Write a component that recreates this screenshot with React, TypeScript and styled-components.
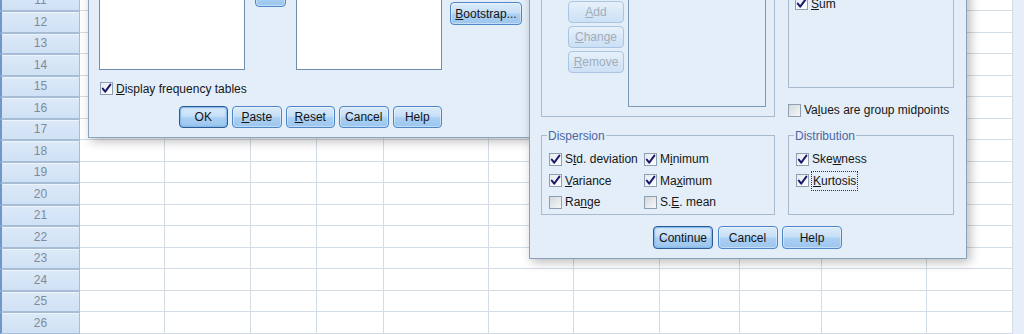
import React from "react";
import styled, { createGlobalStyle, css } from "styled-components";

const Global = createGlobalStyle`
  html, body { margin: 0; padding: 0; background: #fff; }
  body { font-family: "Liberation Sans", Arial, sans-serif; font-size: 12px; color: #111; }
  * { box-sizing: border-box; }
`;

const Screen = styled.div`
  position: relative;
  width: 1024px;
  height: 334px;
  overflow: hidden;
  background: #fff;
`;

/* ---------- spreadsheet ---------- */
const Sheet = styled.div`
  display: flex;
  flex-direction: column;
  margin-top: -10.5px;
`;

const Row = styled.div`
  display: flex;
  height: 21.5px;
  flex: none;
`;

const RowHeader = styled.div`
  width: 80px;
  flex: none;
  display: flex;
  align-items: center;
  justify-content: center;
  color: #7d8b9b;
  font-size: 12px;
  background: linear-gradient(#dce9f8, #d0e1f5);
  border: 1px solid #a7bdd6;
  border-left: 2px solid #6f97c8;
  box-shadow: inset 0 1px 0 #eef4fc;
`;

const Cell = styled.div<{ $w: number }>`
  width: ${(p) => p.$w}px;
  flex: none;
  border-right: 1px solid #d3dbe4;
  border-bottom: 1px solid #d3dbe4;
`;

const Edge = styled.div`
  flex: 1;
  background: #e5eef9;
`;

const COLS = [85, 86, 66, 67, 105, 85, 86, 80, 82, 105, 86];
const ROWS = Array.from({ length: 16 }, (_, i) => i + 11);

/* ---------- dialogs ---------- */
const Window = styled.div`
  position: absolute;
  display: flex;
  flex-direction: column;
  justify-content: flex-end;
  background: #e3eef9;
  border: 1px solid #89a1ba;
  box-shadow: 3px 3px 10px rgba(0, 0, 0, 0.28);
`;

const FreqDialog = styled(Window)`
  left: 88px;
  top: -62px;
  width: 442px;
  height: 200px;
  padding: 0 0 9px 10px;
`;

const StatsDialog = styled(Window)`
  left: 529px;
  top: -62px;
  width: 438px;
  height: 321px;
  padding: 0 12px 9px 11px;
`;

const TopRow = styled.div`
  display: flex;
  align-items: flex-end;
`;

const ListBox = styled.div<{ $w: number; $disabled?: boolean }>`
  width: ${(p) => p.$w}px;
  height: 120px;
  flex: none;
  background: ${(p) => (p.$disabled ? "#e3eef9" : "#ffffff")};
  border: 1px solid ${(p) => (p.$disabled ? "#7c99b6" : "#6f8eaf")};
`;

type Variant = "normal" | "default" | "disabled";

const Button = styled.button<{ $w: number; $h?: number; $v?: Variant; $ml?: number; $mb?: number }>`
  width: ${(p) => p.$w}px;
  height: ${(p) => p.$h ?? 22}px;
  flex: none;
  margin: 0 0 ${(p) => p.$mb ?? 0}px ${(p) => p.$ml ?? 0}px;
  padding: 0;
  font-family: "Liberation Sans", Arial, sans-serif;
  font-size: 12px;
  color: #141414;
  border-radius: 4px;
  border: 1px solid #4f86c8;
  background: linear-gradient(#dcebfb 0%, #c6dff7 45%, #aacff3 55%, #9cc6ee 100%);
  box-shadow: inset 0 0 0 1px rgba(255, 255, 255, 0.4);
  ${(p) =>
    p.$v === "default" &&
    css`
      border-color: #2c5a92;
      box-shadow: inset 0 0 0 1px #86bbec, inset 0 0 3px #6fa9e2;
    `}
  ${(p) =>
    p.$v === "disabled" &&
    css`
      color: #a1acb9;
      border-color: #a9c5e2;
      background: linear-gradient(#e7f1fb 0%, #d9e8f8 50%, #cce0f5 100%);
      box-shadow: none;
    `}
`;

const CheckRow = styled.div<{ $mt: number; $pl?: number }>`
  display: flex;
  align-items: center;
  height: 13px;
  margin-top: ${(p) => p.$mt}px;
  padding-left: ${(p) => p.$pl ?? 0}px;
`;

const ButtonRow = styled.div<{ $w?: number; $gap: number; $justify: string }>`
  display: flex;
  justify-content: ${(p) => p.$justify};
  gap: ${(p) => p.$gap}px;
  margin-top: 11px;
  ${(p) => p.$w && css`width: ${p.$w}px;`}
`;

/* stats dialog */
const StatsGrid = styled.div`
  display: grid;
  grid-template-columns: 234px 166px;
  column-gap: 13px;
  align-items: end;
`;

const Frame = styled.div<{ $h: number; $pad: string }>`
  height: ${(p) => p.$h}px;
  border: 1px solid #a8bacd;
  padding: ${(p) => p.$pad};
  display: flex;
  align-items: flex-end;
`;

const ButtonStack = styled.div`
  display: flex;
  flex-direction: column;
  gap: 3px;
  margin-bottom: 34px;
`;

const RightColumn = styled.div`
  display: flex;
  flex-direction: column;
`;

const Group = styled.fieldset`
  align-self: stretch;
  margin: 12px 0 0;
  padding: 6px 6px 1px 7px;
  border: 1px solid #a8bacd;
  min-width: 0;
`;

const Legend = styled.legend`
  padding: 0 1px;
  margin-left: -2px;
  line-height: 14px;
  color: #4d67a3;
  font-size: 12px;
`;

const CheckGrid = styled.div<{ $cols: string }>`
  display: grid;
  grid-template-columns: ${(p) => p.$cols};
  grid-auto-rows: 21.5px;
  align-items: center;
`;

/* checkbox */
const CheckItem = styled.label`
  display: flex;
  align-items: center;
  gap: 3px;
  white-space: nowrap;
  color: #161616;
  line-height: 14px;
`;

const Box = styled.span<{ $on: boolean }>`
  width: 13px;
  height: 13px;
  flex: none;
  display: inline-flex;
  align-items: center;
  justify-content: center;
  border: 1px solid #8f9fb2;
  background: ${(p) =>
    p.$on
      ? "linear-gradient(135deg, #e6eaf0, #ffffff)"
      : "linear-gradient(135deg, #d4d9df, #f6f7f8)"};
`;

const FocusLabel = styled.span<{ $focus?: boolean }>`
  ${(p) =>
    p.$focus &&
    css`
      border: 1px dotted #333;
      padding: 2px 1px;
      margin-left: -1px;
    `}
`;

const Mn = styled.span`
  text-decoration: underline;
`;

function Label({ text }: { text: string }) {
  const i = text.indexOf("&");
  if (i < 0) return <>{text}</>;
  return (
    <>
      {text.slice(0, i)}
      <Mn>{text.charAt(i + 1)}</Mn>
      {text.slice(i + 2)}
    </>
  );
}

function Check({ text, on, focus }: { text: string; on: boolean; focus?: boolean }) {
  return (
    <CheckItem>
      <Box $on={on}>
        {on && (
          <svg width="11" height="11" viewBox="0 0 11 11">
            <path d="M1.8 5.6 L4.2 8.6 L9.4 1.6" fill="none" stroke="#1b1a6e" strokeWidth="2" strokeLinecap="round" strokeLinejoin="round" />
          </svg>
        )}
      </Box>
      <FocusLabel $focus={focus}>
        <Label text={text} />
      </FocusLabel>
    </CheckItem>
  );
}

export default function App() {
  return (
    <>
      <Global />
      <Screen>
        <Sheet>
          {ROWS.map((r) => (
            <Row key={r}>
              <RowHeader>{r}</RowHeader>
              {COLS.map((w, i) => (
                <Cell key={i} $w={w} />
              ))}
              <Edge />
            </Row>
          ))}
        </Sheet>

        <FreqDialog>
          <TopRow>
            <ListBox $w={146} />
            <Button $w={31} $ml={10} $mb={63} />
            <ListBox $w={146} style={{ marginLeft: 10 }} />
            <Button $w={72} $h={23} $ml={8} $mb={45}>
              <Label text="&Bootstrap..." />
            </Button>
          </TopRow>
          <CheckRow $mt={12} $pl={1}>
            <Check text="&Display frequency tables" on />
          </CheckRow>
          <ButtonRow $w={343} $gap={4} $justify="flex-end">
            <Button $w={49.5} $v="default">OK</Button>
            <Button $w={49.5}><Label text="&Paste" /></Button>
            <Button $w={49.5}><Label text="&Reset" /></Button>
            <Button $w={49.5}>Cancel</Button>
            <Button $w={49.5}>Help</Button>
          </ButtonRow>
        </FreqDialog>

        <StatsDialog>
          <StatsGrid>
            <Frame $h={170} $pad="0 8px 9px 26px">
              <ButtonStack>
                <Button $w={56} $v="disabled"><Label text="&Add" /></Button>
                <Button $w={56} $v="disabled"><Label text="&Change" /></Button>
                <Button $w={56} $v="disabled"><Label text="&Remove" /></Button>
              </ButtonStack>
              <ListBox $w={138} $disabled style={{ marginLeft: "auto", height: 150 }} />
            </Frame>
            <RightColumn>
              <Frame $h={130} $pad="0 0 76px 6px">
                <Check text="&Sum" on />
              </Frame>
              <CheckRow $mt={16} $pl={0}>
                <Check text="Va&lues are group midpoints" on={false} />
              </CheckRow>
            </RightColumn>

            <Group>
              <Legend>Dispersion</Legend>
              <CheckGrid $cols="95px 1fr">
                <Check text="S&td. deviation" on />
                <Check text="M&inimum" on />
                <Check text="&Variance" on />
                <Check text="Ma&ximum" on />
                <Check text="Ra&nge" on={false} />
                <Check text="S.&E. mean" on={false} />
              </CheckGrid>
            </Group>
            <Group>
              <Legend>Distribution</Legend>
              <CheckGrid $cols="1fr">
                <Check text="Ske&wness" on />
                <Check text="&Kurtosis" on focus />
              </CheckGrid>
            </Group>
          </StatsGrid>
          <ButtonRow $gap={4.5} $justify="center">
            <Button $w={60} $h={23} $v="default">Continue</Button>
            <Button $w={60} $h={23}>Cancel</Button>
            <Button $w={60} $h={23}>Help</Button>
          </ButtonRow>
        </StatsDialog>
      </Screen>
    </>
  );
}
